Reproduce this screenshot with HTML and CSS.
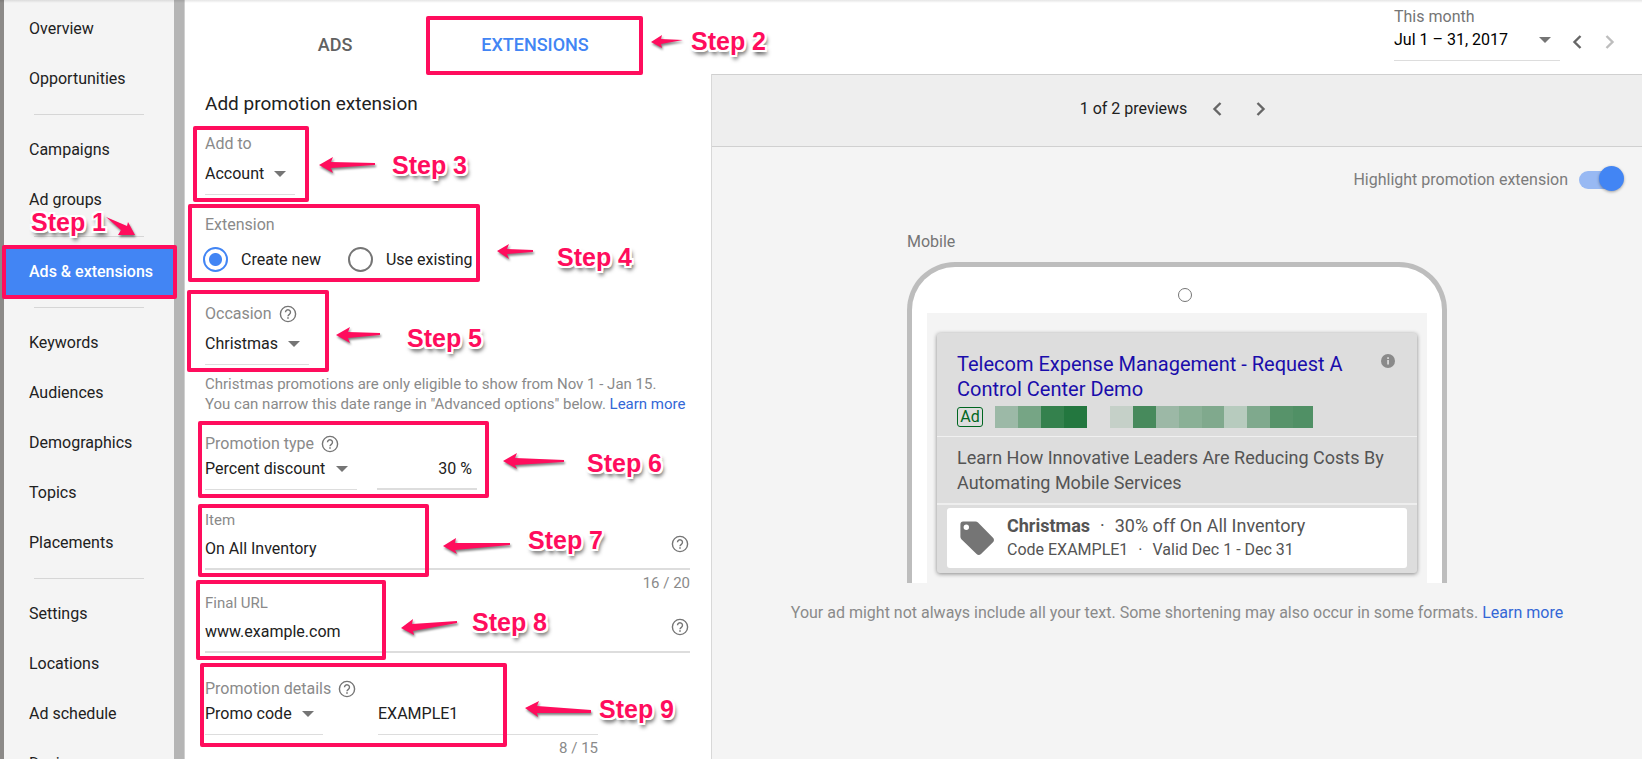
FILE: index.html
```html
<!DOCTYPE html>
<html lang="en">
<head>
<meta charset="utf-8">
<title>Ads &amp; extensions</title>
<link rel="stylesheet" href="styles.css">
</head>
<body>
<svg class="sprite" width="0" height="0" aria-hidden="true">
  <symbol id="help" viewBox="0 0 18 18"><circle cx="9" cy="9" r="7.6" fill="none" stroke="currentColor" stroke-width="1.4"/><path d="M6.5 7.3a2.5 2.5 0 1 1 3.9 2c-.9.6-1.4 1-1.4 1.9" fill="none" stroke="currentColor" stroke-width="1.4"/><path d="M8.2 12.2h1.6v1.5H8.2z" fill="currentColor"/></symbol>
  <symbol id="prev" viewBox="0 0 10 14"><path d="M8.5 1 2.5 7l6 6" fill="none" stroke="currentColor" stroke-width="2.4"/></symbol>
  <symbol id="next" viewBox="0 0 10 14"><path d="m1.500 1 6 6-6 6" fill="none" stroke="currentColor" stroke-width="2.4"/></symbol>
</svg>
<div class="app">
  <nav class="sidebar">
    <a href="#">Overview</a>
    <a href="#">Opportunities</a>
    <hr>
    <a href="#">Campaigns</a>
    <a href="#">Ad groups</a>
    <hr class="deep">
    <a href="#" class="active">Ads &amp; extensions</a>
    <hr>
    <a href="#">Keywords</a>
    <a href="#">Audiences</a>
    <a href="#">Demographics</a>
    <a href="#">Topics</a>
    <a href="#">Placements</a>
    <hr>
    <a href="#">Settings</a>
    <a href="#">Locations</a>
    <a href="#">Ad schedule</a>
    <a href="#">Devices</a>
  </nav>
  <div class="main">
    <header class="header">
      <div class="tabs">
        <button type="button">ADS</button>
        <button type="button" class="current">EXTENSIONS</button>
      </div>
      <div class="dates">
        <label class="range">
          <span class="range-label">This month</span>
          <span class="select"><select><option>Jul 1 – 31, 2017</option></select></span>
        </label>
        <button type="button" class="nav-btn" aria-label="Previous month"><svg><use href="#prev"/></svg></button>
        <button type="button" class="nav-btn off" aria-label="Next month"><svg><use href="#next"/></svg></button>
      </div>
    </header>
    <div class="body">
      <form class="form">
        <h1>Add promotion extension</h1>
        <div class="field">
          <label for="addto">Add to</label>
          <span class="select w-account"><select id="addto"><option>Account</option></select></span>
        </div>
        <fieldset class="field extension">
          <legend>Extension</legend>
          <div class="radios">
            <label><input type="radio" name="ext" checked>Create new</label>
            <label><input type="radio" name="ext">Use existing</label>
          </div>
        </fieldset>
        <div class="field occasion">
          <label for="occ">Occasion<svg class="help"><use href="#help"/></svg></label>
          <span class="select w-occasion"><select id="occ"><option>Christmas</option></select></span>
        </div>
        <p class="hint">Christmas promotions are only eligible to show from Nov 1 - Jan 15.<br>You can narrow this date range in "Advanced options" below. <a href="#">Learn more</a></p>
        <div class="field">
          <label for="type">Promotion type<svg class="help"><use href="#help"/></svg></label>
          <div class="pair">
            <span class="select low w-type"><select id="type"><option>Percent discount</option></select></span>
            <input class="percent" type="text" value="30 %" aria-label="Percent">
          </div>
        </div>
        <div class="field text">
          <label for="item">Item</label>
          <div class="line"><input id="item" type="text" value="On All Inventory"><svg class="help"><use href="#help"/></svg></div>
          <div class="count">16 / 20</div>
        </div>
        <div class="field text url">
          <label for="url">Final URL</label>
          <div class="line"><input id="url" type="text" value="www.example.com"><svg class="help"><use href="#help"/></svg></div>
        </div>
        <div class="field details">
          <label for="details">Promotion details<svg class="help"><use href="#help"/></svg></label>
          <div class="pair wide">
            <span class="select low w-details"><select id="details"><option>Promo code</option></select></span>
            <input class="code" type="text" value="EXAMPLE1" aria-label="Promo code">
          </div>
          <div class="count short">8 / 15</div>
        </div>
      </form>
      <section class="preview">
        <div class="pager">
          <span>1 of 2 previews</span>
          <button type="button" class="nav-btn" aria-label="Previous preview"><svg><use href="#prev"/></svg></button>
          <button type="button" class="nav-btn" aria-label="Next preview"><svg><use href="#next"/></svg></button>
        </div>
        <label class="highlight">Highlight promotion extension<input type="checkbox" class="toggle" checked></label>
        <div class="device">
          <div class="device-label">Mobile</div>
          <div class="phone">
            <div class="speaker"></div>
            <div class="screen">
              <div class="card">
                <div class="card-top">
                  <div class="title-row">
                    <a href="#" class="title">Telecom Expense Management - Request A Control Center Demo</a>
                    <svg class="info" viewBox="0 0 14 14"><circle cx="7" cy="7" r="7" fill="#8a8a8a"/><path d="M6.200 6h1.700v4.500H6.200zM6.200 3.300h1.700v1.600H6.200z" fill="#ddd"/></svg>
                  </div>
                  <div class="ad-row">
                    <span class="badge">Ad</span>
                    <svg class="mosaic" viewBox="0 0 318 22" preserveAspectRatio="none" shape-rendering="crispEdges">
                      <path fill="#9cb9a7" d="M0 0h23v22H0z"/><path fill="#76a585" d="M23 0h23v22H23z"/><path fill="#34814d" d="M46 0h23v22H46z"/><path fill="#23773f" d="M69 0h23v22H69z"/>
                      <path fill="#c5d0c8" d="M115 0h23v22h-23z"/><path fill="#478a5c" d="M138 0h23v22h-23z"/><path fill="#9cb8a6" d="M161 0h23v22h-23z"/><path fill="#8ab096" d="M184 0h23v22h-23z"/><path fill="#80a98d" d="M207 0h22v22h-22z"/><path fill="#b7cbbe" d="M229 0h23v22h-23z"/><path fill="#7fa98d" d="M252 0h23v22h-23z"/><path fill="#57936a" d="M275 0h23v22h-23z"/><path fill="#509065" d="M298 0h20v22h-20z"/>
                    </svg>
                  </div>
                </div>
                <p class="desc">Learn How Innovative Leaders Are Reducing Costs By Automating Mobile Services</p>
                <div class="promo-wrap">
                  <div class="promo">
                    <svg class="tag" viewBox="0 0 34 34"><path fill="#757575" fill-rule="evenodd" d="M3 .5h12.500c1 0 1.800.3 2.500 1l15 15.200c1.300 1.300 1.300 3.300 0 4.600L21 33c-1.300 1.200-3.200 1.200-4.400 0L1.400 18.200C.7 17.500.4 16.700.4 15.700V3.500C.4 1.800 1.400.5 3 .5zm3.300 3a2.700 2.700 0 1 0 0 5.400 2.700 2.700 0 0 0 0-5.400z"/></svg>
                    <div>
                      <div class="promo-main"><b>Christmas</b><i>·</i>30% off On All Inventory</div>
                      <div class="promo-sub">Code EXAMPLE1<i>·</i>Valid Dec 1 - Dec 31</div>
                    </div>
                  </div>
                </div>
              </div>
            </div>
          </div>
        </div>
        <p class="note">Your ad might not always include all your text. Some shortening may also occur in some formats. <a href="#">Learn more</a></p>
      </section>
    </div>
  </div>
</div>

<div class="marks">
  <svg width="820" height="759" viewBox="0 0 820 759">
    <g fill="none" stroke="#ff0d5d" stroke-width="4" stroke-linejoin="round">
      <rect x="4" y="247" width="171" height="50"/>
      <rect x="428" y="18" width="213" height="55"/>
      <rect x="195" y="128" width="112" height="72"/>
      <rect x="190" y="206" width="288" height="74"/>
      <rect x="189" y="292" width="138" height="78"/>
      <rect x="200" y="423" width="287" height="73"/>
      <rect x="200" y="506" width="227" height="69"/>
      <rect x="198" y="582" width="186" height="76"/>
      <rect x="202" y="665" width="303" height="80"/>
    </g>
    <g class="arrows" fill="#ff0d5d">
      <path d="m135 235-7-13-1 4-21-9 15 13-3 5z"/>
      <path d="m651 42 11-7-1 4 22 1-22 4 1 4z"/>
      <path d="m319 165 14-8-2 5 44 1v2l-44 3 2 5z"/>
      <path d="m497 251 12-7-2 5 26 1v2l-26 2 2 5z"/>
      <path d="m336 335 14-8-2 5 32 1v2l-32 3 2 5z"/>
      <path d="m503 461 14-8-2 5 49 2v2l-49 3 2 4z"/>
      <path d="m443 546 13-8-1 5 55 0v2l-55 5 2 4z"/>
      <path d="m401 628 12-9-1 5 45-3v2l-44 8 1 4z"/>
      <path d="m525 708 14-7-2 5 54 4v3l-54 0 1 4z"/>
    </g>
  </svg>
  <span style="left:31px;top:210px">Step 1</span>
  <span style="left:691px;top:29px">Step 2</span>
  <span style="left:392px;top:153px">Step 3</span>
  <span style="left:557px;top:245px">Step 4</span>
  <span style="left:407px;top:326px">Step 5</span>
  <span style="left:587px;top:451px">Step 6</span>
  <span style="left:528px;top:528px">Step 7</span>
  <span style="left:472px;top:610px">Step 8</span>
  <span style="left:599px;top:697px">Step 9</span>
</div>
</body>
</html>
```
FILE: styles.css
```css
* { box-sizing: border-box; }
body {
  margin: 0;
  height: 100vh;
  overflow: hidden;
  background: #fff;
  color: #212121;
  font: 16px/20px Roboto, "Liberation Sans", sans-serif;
}
a { color: #3367d6; text-decoration: none; }
button, input, select { font: inherit; color: inherit; background: none; border: 0; padding: 0; margin: 0; border-radius: 0; }
.sprite { position: absolute; }
svg { display: block; }

.app { display: flex; height: 100%; overflow: hidden; }
.app::before {
  content: "";
  position: absolute;
  top: 0; left: 0; right: 0;
  height: 3px;
  background: linear-gradient(rgba(0,0,0,.1), rgba(0,0,0,0));
}

/* Sidebar */
.sidebar {
  flex: none;
  width: 185px;
  padding-top: 4px;
  border-left: 4px solid #8c8a88;
  border-right: 1px solid #d0d0d0;
  background: #f4f4f4;
  box-shadow: inset -10px 0 #b5b5b5;
}
.sidebar a { display: block; height: 50px; line-height: 50px; padding-left: 25px; margin-right: 10px; color: #212121; }
.sidebar hr { height: 1px; border: 0; margin: 10px 40px 10px 30px; background: #d6d6d6; }
.sidebar .deep { margin-top: 11px; }
.sidebar .active { background: #4285f4; color: #fff; font-weight: 500; }

/* Header */
.main { flex: 1; min-width: 0; display: flex; flex-direction: column; }
.header { flex: none; display: flex; justify-content: space-between; height: 74px; }
.tabs { display: flex; padding: 16px 0 0 50px; }
.tabs button { width: 200px; font-size: 18px; font-weight: 500; color: #616161; }
.tabs .current { color: #4285f4; }
.dates { display: flex; align-items: flex-start; padding: 7px 16px 0 0; }
.range { display: block; width: 166px; }
.range-label { display: block; color: #757575; }
.range .select { height: 34px; padding-bottom: 7px; color: #000; }
.nav-btn { display: grid; place-items: center; width: 44px; height: 40px; color: #666; }
.nav-btn svg { width: 10px; height: 14px; }
.dates .nav-btn { width: 33px; margin-top: 15px; }
.dates .off { color: #bdbdbd; }

/* Form */
.body { flex: 1; min-height: 0; display: flex; }
.form { flex: none; width: 526px; padding: 18px 21px 0 20px; }
.form h1 { margin: 0 0 18px; font-size: 19px; line-height: 24px; font-weight: 400; }
.field { margin: 0 0 20px; border: 0; padding: 0; min-width: 0; }
.field > label, legend { display: flex; align-items: center; gap: 7px; height: 20px; padding: 0; color: #8a8a8a; }
.field.text > label { font-size: 15px; }
.help { flex: none; width: 18px; height: 18px; color: #757575; }
.select { display: flex; position: relative; height: 41px; border-bottom: 1px solid #ddd; }
.select select { flex: 1; min-width: 0; appearance: none; }
.select::after {
  content: "";
  align-self: center;
  margin-right: 9px;
  border: 6px solid transparent;
  border-top-color: #757575;
  border-bottom: 0;
}
.select.low { height: 36px; padding-bottom: 5px; }
.w-account { width: 90px; }
.w-occasion { width: 104px; }
.w-type { width: 152px; }
.w-details { width: 118px; }
.field.extension { margin-bottom: 32px; }
.radios { display: flex; gap: 27px; padding-top: 12px; margin-left: -2px; }
.radios label { display: flex; align-items: center; gap: 13px; }
.radios input { appearance: none; width: 25px; height: 25px; border: 2px solid #757575; border-radius: 50%; }
.radios input:checked { border-color: #4285f4; background: radial-gradient(circle, #4285f4 6px, transparent 7px); }
.field.occasion { margin-bottom: 9px; }
.hint { margin: 0 0 20px; font-size: 15px; white-space: nowrap; color: #8a8a8a; }
.pair { display: flex; gap: 20px; }
.pair.wide { gap: 55px; }
.percent { width: 100px; padding: 0 5px 5px 0; border-bottom: 2px solid #ddd; text-align: right; }
.code { width: 220px; padding-bottom: 5px; border-bottom: 1px solid #ddd; }
.line { display: flex; align-items: center; height: 40px; border-bottom: 2px solid #ddd; }
.line input { flex: 1; height: 38px; padding-bottom: 2px; }
.line .help { margin: 0 1px 10px 0; }
.count { padding-top: 3px; font-size: 15px; text-align: right; color: #8a8a8a; }
.field:has(.count) { margin-bottom: 0; }
.short { width: 393px; }
.field.url { margin-bottom: 26px; }

/* Preview */
.preview { flex: 1; border-left: 1px solid #d8d8d8; background: #f4f4f4; }
.pager {
  display: flex;
  align-items: center;
  justify-content: center;
  height: 73px;
  padding: 0 0 3px 9px;
  border: 1px solid #d0d0d0;
  border-width: 1px 0;
  background: #eee;
}
.pager span { margin-right: 8px; }
.highlight { display: flex; align-items: center; justify-content: flex-end; gap: 11px; height: 25px; margin: 20px 18px 0 0; color: #7b7b7b; }
.toggle { appearance: none; position: relative; width: 45px; height: 18px; border-radius: 9px; background: linear-gradient(90deg, #98b9f3 36px, transparent 36px); }
.toggle::after {
  content: "";
  position: absolute;
  right: 0; top: -5px;
  width: 25px; height: 25px;
  border-radius: 50%;
  background: #4285f4;
  box-shadow: 0 1px 3px rgba(0,0,0,.35);
}
.device { width: 540px; max-width: 100%; margin: 40px auto 0; }
.device-label { color: #757575; }
.phone { margin-top: 10px; padding: 21px 15px 0; border: 5px solid #bdbdbd; border-bottom: 0; border-radius: 48px 48px 0 0; background: #fff; }
.speaker { width: 14px; height: 14px; margin: 0 235px 11px auto; border: 1px solid #757575; border-radius: 50%; }
.screen { padding: 20px 10px 10px; background: #f4f4f4; }
.card { background: #ddd; border-radius: 3px; box-shadow: 0 1px 4px rgba(0,0,0,.45); }
.card-top { padding: 19px 20px 8px; border-bottom: 1px solid #f0f0f0; }
.title-row { display: flex; justify-content: space-between; }
.title { width: 400px; font-size: 20px; line-height: 25px; color: #1a0dab; }
.info { flex: none; width: 14px; height: 14px; margin: 2px 2px 0 0; }
.ad-row { display: flex; align-items: center; gap: 12px; margin-top: 4px; }
.badge { width: 26px; height: 20px; line-height: 18px; border: 1px solid #006621; border-radius: 3px; text-align: center; color: #006621; }
.mosaic { width: 318px; height: 22px; }
.desc { margin: 0; padding: 8px 20px; border-bottom: 2px solid #eee; font-size: 18px; line-height: 25px; color: #545454; }
.promo-wrap { padding: 3px 10px 5px; }
.promo { display: flex; align-items: center; gap: 13px; height: 60px; padding: 0 13px 1px; border-radius: 3px; background: #fff; color: #545454; }
.tag { width: 34px; height: 34px; }
.promo i { margin: 0 10px; font-style: normal; }
.promo-main { font-size: 18px; line-height: 25px; }
.promo-sub { line-height: 24px; }
.note { margin: 20px 0 0; text-align: center; color: #8a8a8a; }

/* Step callouts, laid over the page */
.marks { position: absolute; top: 0; left: 0; pointer-events: none; }
.marks span {
  position: absolute;
  white-space: nowrap;
  font: bold 25px/24px "Liberation Sans", Arial, sans-serif;
  color: #ff0d5d;
  text-shadow: 2px 0 #fff, -2px 0 #fff, 0 2px #fff, 0 -2px #fff, 2px 2px #fff, -2px 2px #fff, 2px -2px #fff, -2px -2px #fff, 2px 4px 4px rgba(0,0,0,.8);
}
.arrows { filter: drop-shadow(1px 2px 1px rgba(0,0,0,.5)); }
```
